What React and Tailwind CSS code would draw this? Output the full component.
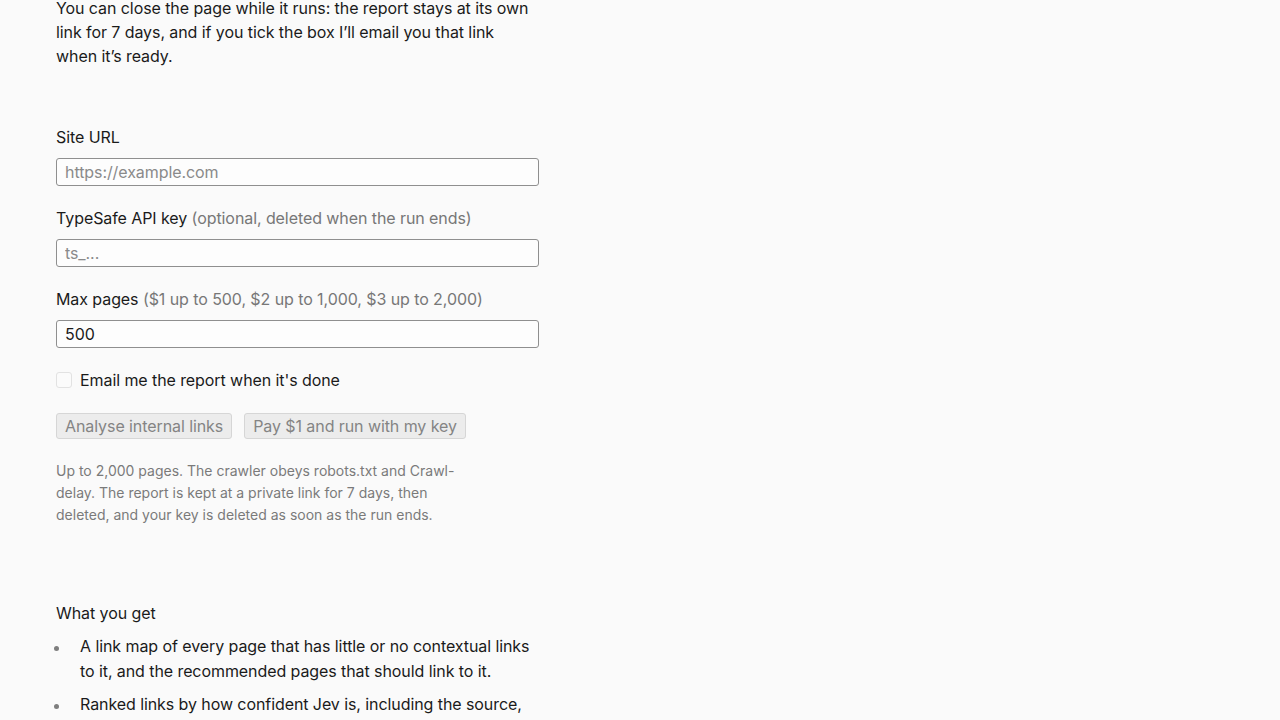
import React from 'react';

const Field = ({ label, hint, placeholder, value }) => (
  <div className="flex flex-col">
    <label className="leading-6 text-[#1a1a1a]">
      {label}
      {hint && <span className="text-[#777]"> {hint}</span>}
    </label>
    <input
      className="mt-[9px] h-[28px] w-full rounded-[3px] border border-[#8f8f8f] bg-[#fdfdfd] px-2 text-base tracking-[-0.08px] text-[#1a1a1a] placeholder:text-[#8a8a8a] outline-none"
      placeholder={placeholder}
      defaultValue={value}
    />
  </div>
);

const Bullet = ({ children }) => (
  <li className="flex leading-[25px]">
    <span className="flex h-[25px] w-6 shrink-0 items-center">
      <span className="-ml-[2px] mt-[3px] h-[5px] w-[5px] rounded-full bg-[#7e7e7e]" />
    </span>
    <span>{children}</span>
  </li>
);

export default function App() {
  return (
    <div className="min-h-screen bg-[#fafafa] font-['Inter',sans-serif] tracking-[-0.08px] text-[#1a1a1a]">
      <main className="px-14">
        <div className="w-[483px] -mt-[4px]">
          <p className="text-base leading-6">
            You can close the page while it runs: the report stays at its own link for 7 days, and if you tick the box I’ll email you that link when it’s ready.
          </p>

          <form className="mt-[57px] flex flex-col gap-5">
            <Field label="Site URL" placeholder="https://example.com" />
            <Field label="TypeSafe API key" hint="(optional, deleted when the run ends)" placeholder="ts_..." />
            <Field label="Max pages" hint="($1 up to 500, $2 up to 1,000, $3 up to 2,000)" value="500" />

            <label className="flex items-center gap-2 leading-6">
              <span className="h-4 w-4 rounded-[3px] border border-[#e2e2e2] bg-[#fbfbfb]" />
              Email me the report when it's done
            </label>

            <div className="mt-[1px] flex gap-3">
              <button type="button" disabled className="h-[26px] rounded-[3px] border border-[#d6d6d6] bg-[#ececec] px-2 text-base leading-6 tracking-[-0.08px] text-[#848484]">
                Analyse internal links
              </button>
              <button type="button" disabled className="h-[26px] rounded-[3px] border border-[#d6d6d6] bg-[#ececec] px-2 text-base leading-6 tracking-[-0.08px] text-[#848484]">
                Pay $1 and run with my key
              </button>
            </div>

            <p className="mt-[1px] w-[400px] text-sm leading-[22px] tracking-normal text-[#7a7a7a]">
              Up to 2,000 pages. The crawler obeys robots.txt and Crawl-delay. The report is kept at a private link for 7 days, then deleted, and your key is deleted as soon as the run ends.
            </p>
          </form>

          <section className="mt-[75px]">
            <h2 className="text-base font-normal leading-6">What you get</h2>
            <ul className="mt-[9px] flex flex-col gap-2">
              <Bullet>
                A link map of every page that has little or no contextual links to it, and the recommended pages that should link to it.
              </Bullet>
              <Bullet>
                Ranked links by how confident Jev is, including the source, target and anchor text for each suggested link.
              </Bullet>
            </ul>
          </section>
        </div>
      </main>
    </div>
  );
}
